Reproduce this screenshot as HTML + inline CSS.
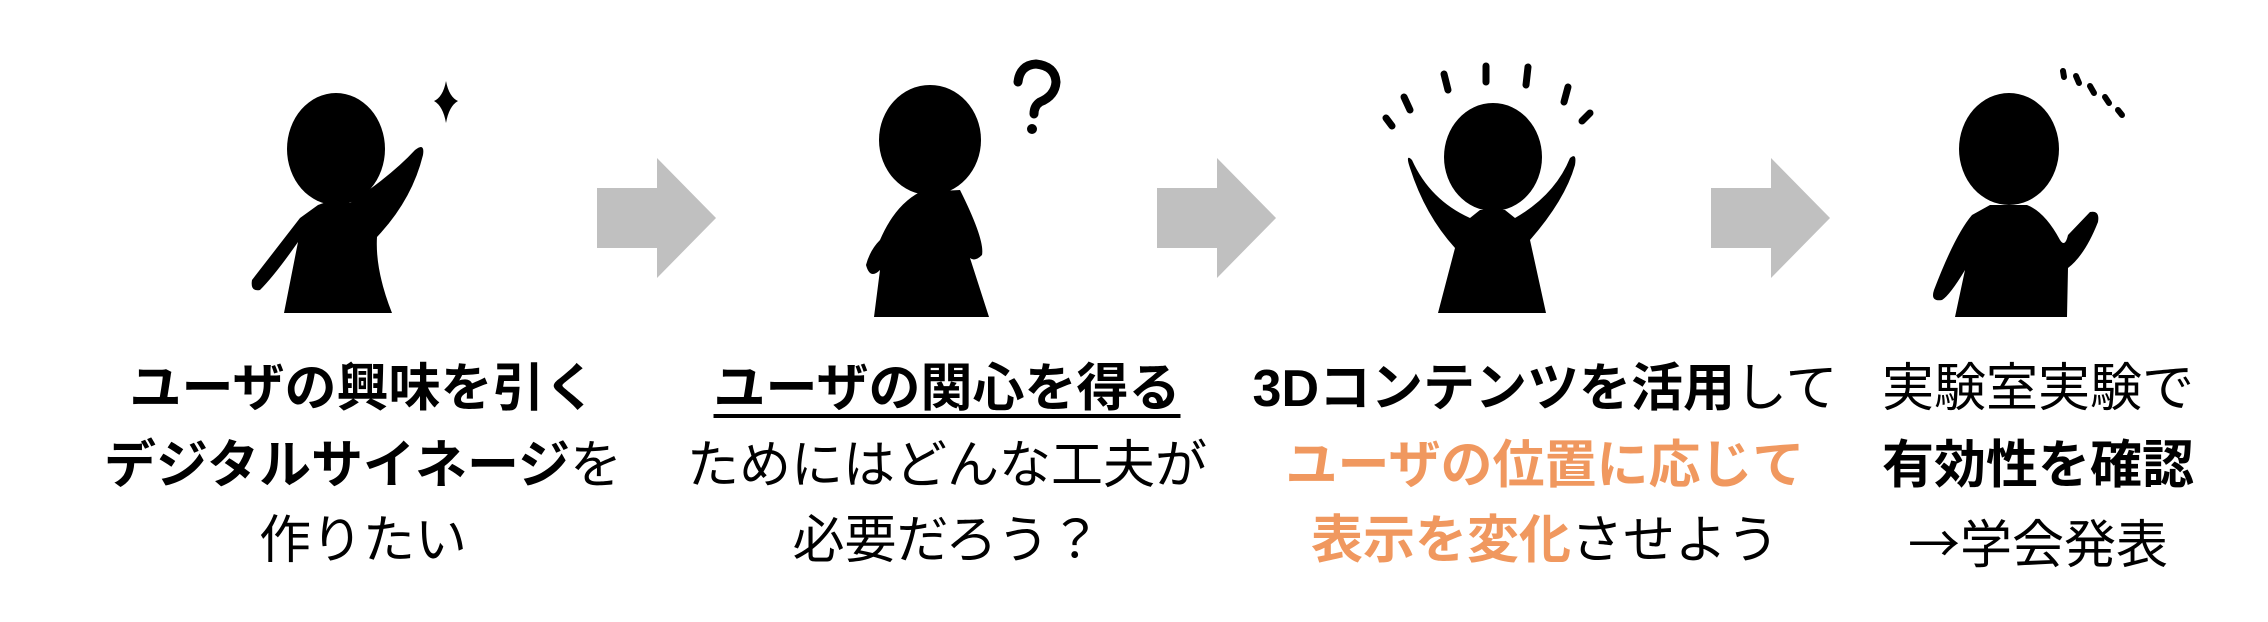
<!DOCTYPE html>
<html><head><meta charset="utf-8"><style>
html,body{margin:0;padding:0;background:#fff;}
body{width:2268px;height:622px;position:relative;overflow:hidden;font-family:"Liberation Sans","Noto Sans CJK JP",sans-serif;}
.t{position:absolute;width:700px;text-align:center;font-size:52px;line-height:60px;white-space:nowrap;color:#000;}
b{font-weight:700;}
.o{color:#f0985f;font-weight:700;}
.u{text-decoration:underline;text-decoration-thickness:4px;text-underline-offset:8px;}
.j{font-family:"Noto Sans CJK JP",sans-serif;}
svg{position:absolute;left:0;top:0;}
</style></head><body>
<svg width="2268" height="622" viewBox="0 0 2268 622">
<g fill="#c0c0c0">
<polygon points="597,188 657,188 657,158 716,218 657,278 657,248 597,248"/>
<polygon points="1157,188 1217,188 1217,158 1276,218 1217,278 1217,248 1157,248"/>
<polygon points="1711,188 1771,188 1771,158 1830,218 1771,278 1771,248 1711,248"/>
</g>
<g fill="#000">
<ellipse cx="336" cy="149" rx="49" ry="56"/>
<path d="M318,205 Q335,198 350,203 Q392,175 415,150 Q425,142 423,155 Q412,200 377,237 Q375,270 392,313 L284,313 L298,242 Q275,275 260,290 Q250,292 252,280 L300,218 Z"/>
<path d="M446,81 Q449,97 458,101 Q449,106 446,123 Q443,106 434,101 Q443,97 446,81 Z"/>
<ellipse cx="930" cy="140" rx="51" ry="55"/>
<path d="M920,192 L960,190 Q985,240 982,255 Q975,262 970,258 L989,317 L874,317 L880,270 Q870,280 866,265 Q870,250 880,240 Q895,205 920,192 Z"/>
<path d="M1018,82 Q1020,65 1036,64 Q1055,66 1056,82 Q1055,96 1040,102 Q1034,106 1034,114" fill="none" stroke="#000" stroke-width="9" stroke-linecap="round"/>
<circle cx="1032" cy="129" r="5"/>
<ellipse cx="1493" cy="157" rx="49" ry="54"/>
<path d="M1412,160 Q1405,153 1410,168 Q1425,215 1455,248 L1438,313 L1546,313 L1530,240 Q1565,200 1575,165 Q1577,152 1570,158 Q1555,195 1515,218 L1505,210 L1480,210 L1470,218 Q1430,200 1412,160 Z"/>
<g stroke="#000" stroke-width="7" stroke-linecap="round" fill="none">
<line x1="1386" y1="118" x2="1392" y2="126"/>
<line x1="1404" y1="97" x2="1410" y2="110"/>
<line x1="1444" y1="74" x2="1448" y2="90"/>
<line x1="1486" y1="66" x2="1486" y2="82"/>
<line x1="1528" y1="67" x2="1526" y2="85"/>
<line x1="1568" y1="87" x2="1564" y2="102"/>
<line x1="1590" y1="113" x2="1582" y2="121"/>
</g>
<ellipse cx="2009" cy="149" rx="50" ry="56"/>
<path d="M1990,205 L2027,205 Q2045,212 2060,240 Q2065,248 2068,235 L2090,212 Q2100,210 2098,222 Q2085,255 2068,268 L2067,317 L1955,317 L1965,270 Q1950,295 1942,300 Q1930,302 1934,290 Q1955,235 1972,215 Z"/>
<g stroke="#000" stroke-width="6" stroke-linecap="round" fill="none">
<line x1="2063" y1="71" x2="2064" y2="77"/>
<line x1="2076" y1="76" x2="2079" y2="83"/>
<line x1="2090" y1="86" x2="2094" y2="93"/>
<line x1="2105" y1="97" x2="2109" y2="103"/>
<line x1="2118" y1="110" x2="2122" y2="115"/>
</g>
</g>
</svg>
<div class="t" style="left:13px;top:359px"><b>ユーザの興味を引く</b></div>
<div class="t" style="left:13px;top:436px"><b>デジタルサイネージ</b>を</div>
<div class="t" style="left:13px;top:511px">作りたい</div>
<div class="t" style="left:597px;top:359px"><b class="u">ユーザの関心を得る</b></div>
<div class="t" style="left:597px;top:436px">ためにはどんな工夫が</div>
<div class="t" style="left:597px;top:511px">必要だろう？</div>
<div class="t" style="left:1195px;top:359px"><b>3Dコンテンツを活用</b>して</div>
<div class="t" style="left:1195px;top:436px"><span class="o">ユーザの位置に応じて</span></div>
<div class="t" style="left:1195px;top:511px"><span class="o">表示を変化</span>させよう</div>
<div class="t" style="left:1688px;top:359px">実験室実験で</div>
<div class="t" style="left:1688px;top:436px"><b>有効性を確認</b></div>
<div class="t" style="left:1688px;top:511px"><span class="j">→</span>学会発表</div>
</body></html>
